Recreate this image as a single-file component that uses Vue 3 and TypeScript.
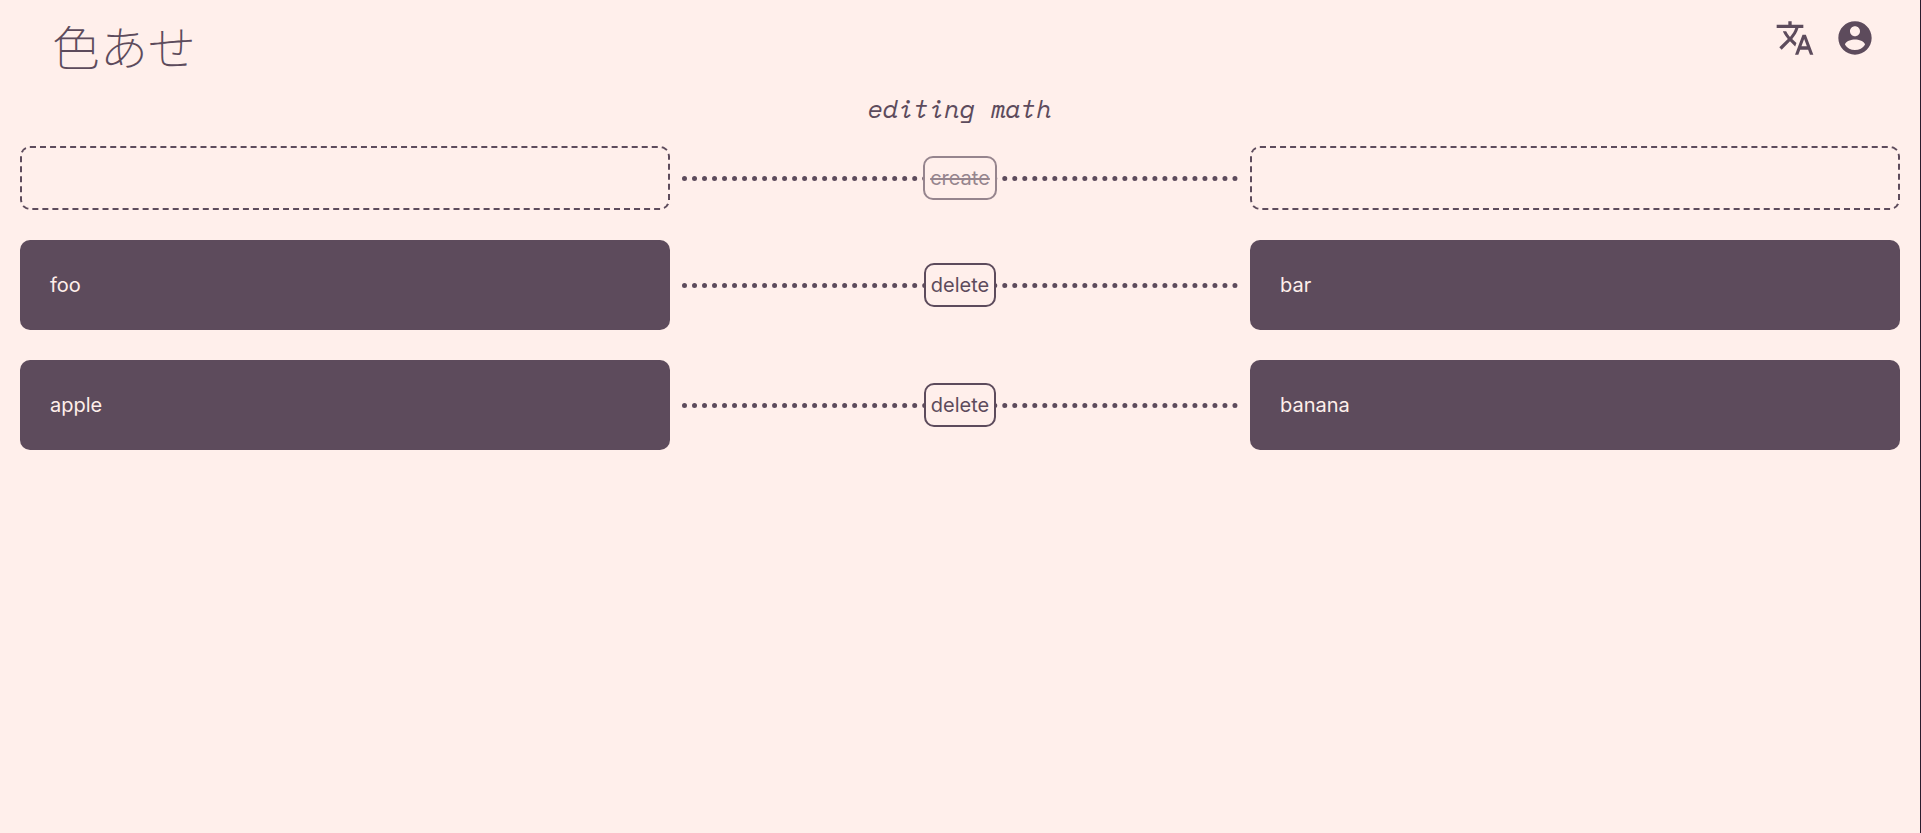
<script setup lang="ts">
import { computed, ref } from 'vue'

interface Card {
  id: number
  front: string
  back: string
}

const deck = ref('math')
const cards = ref<Card[]>([
  { id: 1, front: 'foo', back: 'bar' },
  { id: 2, front: 'apple', back: 'banana' },
])
const front = ref('')
const back = ref('')
const incomplete = computed(() => !front.value.trim() || !back.value.trim())

function create() {
  if (incomplete.value) return
  cards.value.unshift({ id: Date.now(), front: front.value, back: back.value })
  front.value = ''
  back.value = ''
}

function remove(id: number) {
  cards.value = cards.value.filter((card) => card.id !== id)
}
</script>

<template>
  <div class="page">
    <header class="header">
      <a class="logo" href="#" lang="ja">色あせ</a>
      <nav class="actions">
        <button class="icon-button" type="button" aria-label="Language">
          <svg viewBox="0 0 24 24" aria-hidden="true">
            <path d="M12.87 15.07l-2.54-2.51.03-.03c1.74-1.94 2.98-4.17 3.71-6.53H17V4h-7V2H8v2H1v1.99h11.17C11.5 7.92 10.44 9.75 9 11.35 8.07 10.32 7.3 9.19 6.69 8h-2c.73 1.63 1.73 3.17 2.98 4.56l-5.09 5.02L4 19l5-5 3.11 3.11.76-2.04zM18.5 10h-2L12 22h2l1.12-3h4.75L21 22h2l-4.5-12zm-2.62 7l1.62-4.33L19.12 17h-3.24z" />
          </svg>
        </button>
        <button class="icon-button" type="button" aria-label="Account">
          <svg viewBox="0 0 24 24" aria-hidden="true">
            <path d="M12 2C6.48 2 2 6.48 2 12s4.48 10 10 10 10-4.48 10-10S17.52 2 12 2zm0 3c1.66 0 3 1.34 3 3s-1.34 3-3 3-3-1.34-3-3 1.34-3 3-3zm0 14.2c-2.5 0-4.71-1.28-6-3.22.03-1.99 4-3.08 6-3.08 1.99 0 5.97 1.09 6 3.08-1.29 1.94-3.5 3.22-6 3.22z" />
          </svg>
        </button>
      </nav>
    </header>

    <main class="editor">
      <h1 class="title">editing {{ deck }}</h1>

      <form class="row" @submit.prevent="create">
        <input v-model="front" class="field" type="text" aria-label="Front" />
        <div class="link">
          <button class="action" type="submit" :disabled="incomplete">create</button>
        </div>
        <input v-model="back" class="field" type="text" aria-label="Back" />
      </form>

      <div v-for="card in cards" :key="card.id" class="row">
        <div class="card">{{ card.front }}</div>
        <div class="link">
          <button class="action" type="button" @click="remove(card.id)">delete</button>
        </div>
        <div class="card">{{ card.back }}</div>
      </div>
    </main>
  </div>
</template>

<style>
body {
  background: #ffefeb;
}
</style>

<style scoped>
.page {
  --paper: #ffefeb;
  --ink: #5d4b5c;
  --faded: #96858e;
  box-sizing: border-box;
  min-height: 100vh;
  border-right: 1px solid #2a1c2e;
  background: var(--paper);
  color: var(--ink);
  font-family: Inter, "Noto Sans CJK JP", sans-serif;
  font-size: 20px;
  line-height: 30px;
}

.header {
  display: flex;
  align-items: flex-start;
  justify-content: space-between;
  padding: 15px 45px 0 52px;
}

.logo {
  color: inherit;
  font-family: "Noto Sans JP", "Noto Sans CJK JP", sans-serif;
  font-size: 48px;
  font-weight: 200;
  line-height: 60px;
  text-decoration: none;
}

.actions {
  display: flex;
  gap: 20px;
  padding-top: 3px;
}

.icon-button {
  width: 40px;
  height: 40px;
  padding: 0;
  border: 0;
  background: none;
  color: inherit;
  cursor: pointer;
}

.icon-button svg {
  display: block;
  width: 100%;
  height: 100%;
  fill: currentColor;
}

.editor {
  display: flex;
  flex-direction: column;
  gap: 30px;
  padding: 15px 20px 20px;
}

.title {
  margin: 0 0 -12px;
  font-family: "Space Mono", "Liberation Mono", monospace;
  font-size: 25px;
  font-style: italic;
  font-weight: 400;
  line-height: 38px;
  text-align: center;
}

.row {
  display: grid;
  grid-template-columns: 65fr 58fr 65fr;
  align-items: center;
}

.field {
  box-sizing: border-box;
  width: 100%;
  height: 64px;
  padding: 0 28px;
  border: 2px dashed var(--ink);
  border-radius: 10px;
  outline: none;
  background: transparent;
  color: inherit;
  font: inherit;
}

.card {
  padding: 30px;
  border-radius: 10px;
  background: var(--ink);
  color: var(--paper);
}

.link {
  display: grid;
  align-items: center;
  justify-items: center;
  margin: 0 12px;
}

.link::before {
  content: "";
  grid-area: 1 / 1;
  width: 100%;
  border-top: 5px dotted var(--ink);
}

.action {
  z-index: 1;
  grid-area: 1 / 1;
  padding: 5px;
  border: 2px solid currentColor;
  border-radius: 10px;
  background: var(--paper);
  color: inherit;
  font: inherit;
  cursor: pointer;
}

.action:disabled {
  color: var(--faded);
  text-decoration: line-through;
  cursor: default;
}
</style>
